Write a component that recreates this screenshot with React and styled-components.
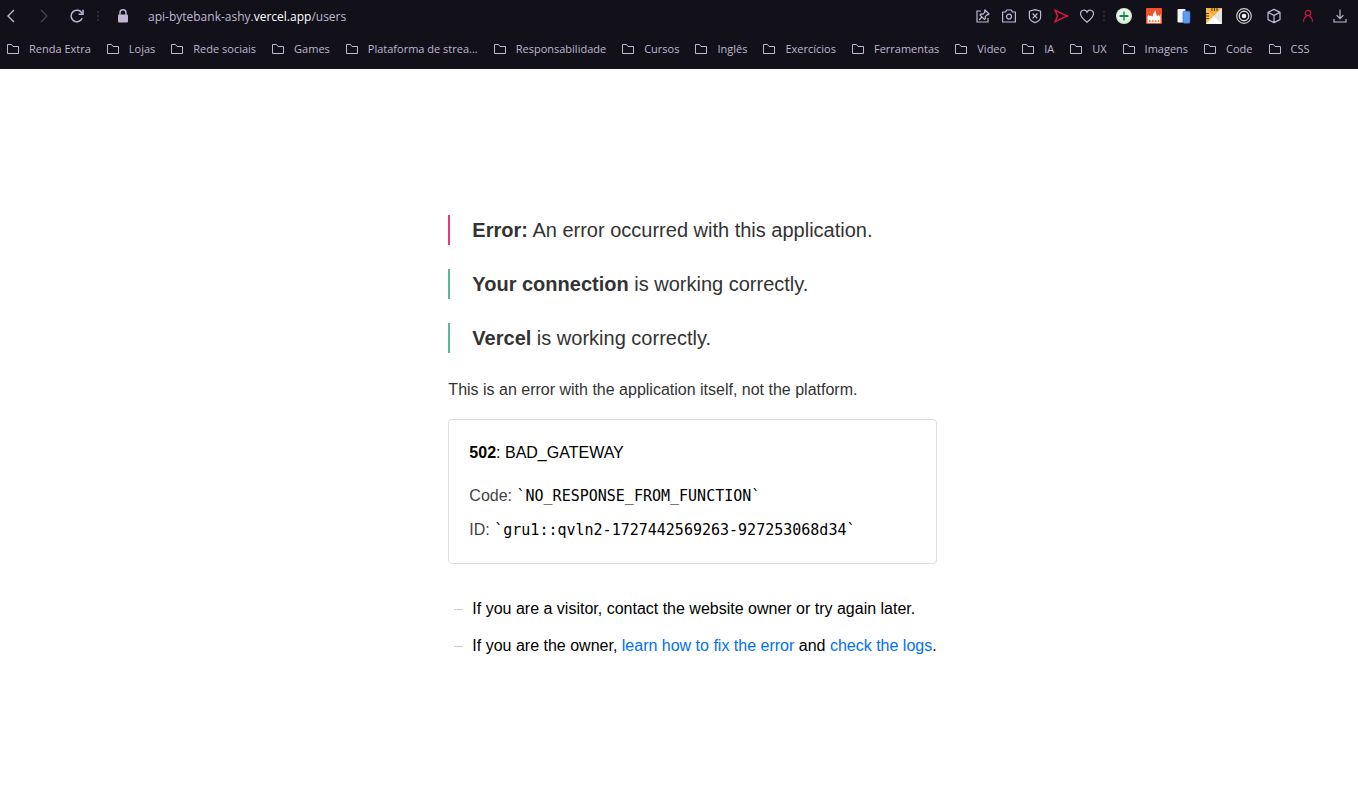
import React from "react";
import styled, { createGlobalStyle } from "styled-components";

const folders = [
    "Renda Extra",
    "Lojas",
    "Rede sociais",
    "Games",
    "Plataforma de strea...",
    "Responsabilidade",
    "Cursos",
    "Inglês",
    "Exercícios",
    "Ferramentas",
    "Video",
    "IA",
    "UX",
    "Imagens",
    "Code",
    "CSS",
];

const Icon = ({ size = 16, children }) => (
    <svg
        width={size}
        height={size}
        viewBox="0 0 16 16"
        fill="none"
        stroke="currentColor"
        strokeWidth="1.2"
        aria-hidden="true"
    >
        {children}
    </svg>
);

const BackIcon = () => (
    <Icon><path d="M11 2L5 8l6 6" strokeWidth="1.4" /></Icon>
);

const ForwardIcon = () => (
    <Icon><path d="M5 2l6 6-6 6" strokeWidth="1.4" /></Icon>
);

const ReloadIcon = () => (
    <Icon>
        <path d="M13.2 10.3A5.8 5.8 0 1 1 13 5.2" strokeWidth="1.5" />
        <path d="M14 1.8v4.4H9.6" strokeWidth="1.5" />
    </Icon>
);

const LockIcon = () => (
    <Icon>
        <path d="M5 7V4.8a3 3 0 0 1 6 0V7" strokeWidth="1.4" />
        <rect x="3" y="6.5" width="10" height="8" rx="1" fill="currentColor" stroke="none" />
    </Icon>
);

const FolderIcon = () => (
    <svg width="12" height="12" viewBox="0 0 12 12" fill="none" stroke="currentColor" aria-hidden="true">
        <path d="M.5 1.5h4l1.5 2h5.5v7H.5z" strokeLinejoin="round" />
    </svg>
);

const PinIcon = () => (
    <Icon>
        <path d="M6 3H2v11h11v-4" />
        <path d="M10 2l4 4-1 .8-.8-.2-2 2 .2 2-1 .9L5 7l1-1 2 .2 2-2L9.5 3zM7 9l-3 3" />
    </Icon>
);

const CameraIcon = () => (
    <Icon>
        <path d="M1.6 4h3l1-2h4.8l1 2h3v10H1.6z" strokeLinejoin="round" />
        <circle cx="8" cy="8.6" r="2.5" />
    </Icon>
);

const ShieldIcon = () => (
    <Icon>
        <path d="M8 1.6l5.6 1.6v6c0 2.5-2.6 4.3-5.6 5.4-3-1.1-5.6-2.9-5.6-5.4v-6z" />
        <path d="M5.6 5.5l4.8 4.8M10.4 5.5l-4.8 4.8" />
    </Icon>
);

const SendIcon = () => (
    <Icon><path d="M2 2.4L14.3 8 2 13.6 4.5 8z" strokeWidth="1.4" /></Icon>
);

const HeartIcon = () => (
    <Icon>
        <path d="M8 14.2C4.5 11.2 1.5 8.9 1.5 5.7A3.4 3.4 0 0 1 8 4.2a3.4 3.4 0 0 1 6.5 1.5C14.5 8.9 11.5 11.2 8 14.2z" />
    </Icon>
);

const PlusIcon = () => (
    <Icon>
        <circle cx="8" cy="8" r="8" fill="#d3ebcd" stroke="none" />
        <circle cx="8" cy="7.4" r="6.6" fill="#ecf7e9" stroke="none" />
        <path d="M8 3.5v9" stroke="#3fb56a" strokeWidth="2" />
        <path d="M3.5 8h9" stroke="#12805c" strokeWidth="2" />
    </Icon>
);

const FlameIcon = () => (
    <Icon>
        <rect width="16" height="16" rx="1" fill="#f1502b" stroke="none" />
        <path d="M1.5 15V8.5l1.2-1.7 1 1.4L5 7.4l1.4 1.4L7.6 5 9.4 2.2 10 5l1 3.4 1.4-1.6.8 1.6L14.5 6v9z" fill="#fff" stroke="none" />
        <path d="M3 13h10.5" stroke="#f1502b" strokeWidth="1.6" strokeDasharray="1.6 1.3" />
    </Icon>
);

const PagesIcon = () => (
    <Icon>
        <rect x="1.5" y="1" width="8" height="13.5" rx="1" fill="#f2f5fa" stroke="none" />
        <rect x="7" y="3.2" width="7" height="12" rx="1.2" fill="#5b9df5" stroke="#3a6fc0" strokeWidth=".6" />
    </Icon>
);

const RulerIcon = () => (
    <Icon>
        <rect width="16" height="16" rx="1" fill="#f2f2f2" stroke="none" />
        <path d="M0 16V1l1-1h15L8 8z" fill="#f7ae3c" stroke="none" />
        <path d="M0 0l8 8-8 8z" fill="#fbbd4a" stroke="none" />
        <path d="M8 8l8 8H0z" fill="#fff" stroke="none" />
        <path d="M16 0v16L8 8z" fill="#e4e4e4" stroke="none" />
        <path d="M6 0v3M8.5 0v3M11 0v3M0 5.5h3M0 8h3M0 10.5h3" stroke="#5d4212" strokeWidth="1.1" />
    </Icon>
);

const TargetIcon = () => (
    <Icon>
        <circle cx="8" cy="8" r="7.3" stroke="#c8c8c8" />
        <circle cx="8" cy="8" r="4.7" stroke="#d8d8d8" strokeWidth="1.4" />
        <circle cx="8" cy="8" r="2.3" fill="#f0f0f0" stroke="none" />
    </Icon>
);

const CubeIcon = () => (
    <Icon>
        <path d="M8 1.4l6 3v7.2l-6 3-6-3V4.4zM2 4.4l6 3 6-3M8 7.4v7.2" strokeLinejoin="round" />
    </Icon>
);

const PersonIcon = () => (
    <Icon>
        <circle cx="8" cy="5" r="2.7" />
        <path d="M3.6 13.8v-1.2c0-2.1 1.4-3.4 3-4.8M12.4 13.8v-1.2c0-2.1-1.4-3.4-3-4.8" />
    </Icon>
);

const DownloadIcon = () => (
    <Icon>
        <path d="M8 1.5v9M4.6 7.2L8 10.6l3.4-3.4M2 11v3h12v-3" />
    </Icon>
);

const Browser = () => {
    return (
        <StyledBrowser>
            <Toolbar>
                <NavButtons>
                    <ToolButton aria-label="Back"><BackIcon /></ToolButton>
                    <ToolButton aria-label="Forward" $color="#454052"><ForwardIcon /></ToolButton>
                    <ToolButton aria-label="Reload"><ReloadIcon /></ToolButton>
                </NavButtons>
                <Dots $before={12} $after={16} />
                <ToolButton aria-label="Site information"><LockIcon /></ToolButton>
                <Address>
                    api-bytebank-ashy.<span>vercel.app</span>/users
                </Address>
                <PageTools>
                    <ToolButton aria-label="Pin"><PinIcon /></ToolButton>
                    <ToolButton aria-label="Snapshot"><CameraIcon /></ToolButton>
                    <ToolButton aria-label="Ad blocker"><ShieldIcon /></ToolButton>
                    <ToolButton aria-label="My Flow" $color="#e0173f"><SendIcon /></ToolButton>
                    <ToolButton aria-label="Add bookmark"><HeartIcon /></ToolButton>
                </PageTools>
                <Dots $before={8} $after={11} />
                <Extensions>
                    <ToolButton aria-label="Add"><PlusIcon /></ToolButton>
                    <ToolButton aria-label="Flame"><FlameIcon /></ToolButton>
                    <ToolButton aria-label="Pages"><PagesIcon /></ToolButton>
                    <ToolButton aria-label="Ruler"><RulerIcon /></ToolButton>
                    <ToolButton aria-label="Target"><TargetIcon /></ToolButton>
                    <ToolButton aria-label="Extensions"><CubeIcon /></ToolButton>
                </Extensions>
                <Profile>
                    <ToolButton aria-label="Profile" $color="#d0173f"><PersonIcon /></ToolButton>
                    <ToolButton aria-label="Downloads"><DownloadIcon /></ToolButton>
                </Profile>
            </Toolbar>
            <Bookmarks>
                {folders.map((name) => (
                    <Bookmark key={name}>
                        <FolderIcon />
                        {name}
                    </Bookmark>
                ))}
            </Bookmarks>
        </StyledBrowser>
    );
};

const App = () => {
    return (
        <>
            <GlobalStyle />
            <Page>
                <Browser />
                <Main>
                    <Content>
                        <Status $color="#eb367f"><strong>Error:</strong> An error occurred with this application.</Status>
                        <Status $color="#59b89c"><strong>Your connection</strong> is working correctly.</Status>
                        <Status $color="#59b89c"><strong>Vercel</strong> is working correctly.</Status>
                        <Note>This is an error with the application itself, not the platform.</Note>
                        <ErrorCard>
                            <h1><strong>502</strong>: BAD_GATEWAY</h1>
                            <p>Code: <code>`NO_RESPONSE_FROM_FUNCTION`</code></p>
                            <p>ID: <code>`gru1::qvln2-1727442569263-927253068d34`</code></p>
                        </ErrorCard>
                        <Steps>
                            <li>If you are a visitor, contact the website owner or try again later.</li>
                            <li>
                                If you are the owner, <a href="#fix">learn how to fix the error</a> and{" "}
                                <a href="#logs">check the logs</a>.
                            </li>
                        </Steps>
                    </Content>
                </Main>
            </Page>
        </>
    );
};

const GlobalStyle = createGlobalStyle`
    *{
        box-sizing: border-box;
        margin: 0;
        padding: 0;
    }
    body{
        background: #fff;
        color: #000;
        font-family: "Liberation Sans", Arial, sans-serif;
        font-size: 16px;
    }
`;

const Page = styled.div`
    display: flex;
    flex-direction: column;
    min-height: 100vh;
`;

const StyledBrowser = styled.header`
    background: #121019;
    color: #bfb7d3;
    font-family: "Open Sans", "Noto Sans", sans-serif;
    padding-bottom: 4px;
`;

const Toolbar = styled.div`
    display: flex;
    align-items: center;
    height: 32px;
    padding: 0 10px 0 3px;
`;

const ToolButton = styled.button`
    display: flex;
    background: none;
    border: none;
    color: ${(props) => props.$color || "inherit"};
    cursor: pointer;
`;

const NavButtons = styled.nav`
    display: flex;
    gap: 17px;
`;

const Dots = styled.span`
    width: 2px;
    height: 10px;
    margin-left: ${(props) => props.$before}px;
    margin-right: ${(props) => props.$after}px;
    background: repeating-linear-gradient(#2b2835 0 2px, transparent 2px 4px);
`;

const Address = styled.div`
    flex: 1;
    padding-left: 17px;
    font-size: 12px;
    white-space: nowrap;
    span{
        color: #fff;
    }
`;

const PageTools = styled.div`
    display: flex;
    gap: 10px;
`;

const Extensions = styled.div`
    display: flex;
    gap: 14px;
`;

const Profile = styled.div`
    display: flex;
    gap: 16px;
    padding-left: 18px;
`;

const Bookmarks = styled.nav`
    display: flex;
    align-items: center;
    gap: 16px;
    height: 33px;
    padding: 0 7px;
    overflow: hidden;
`;

const Bookmark = styled.button`
    display: flex;
    align-items: center;
    gap: 10px;
    background: none;
    border: none;
    color: inherit;
    cursor: pointer;
    font-family: inherit;
    font-size: 11px;
    white-space: nowrap;
    svg{
        flex: none;
    }
`;

const Main = styled.main`
    display: flex;
    flex: 1;
    align-items: center;
    justify-content: center;
    padding: 7px 0 0 27px;
`;

const Content = styled.div`
    line-height: 20px;
`;

const Status = styled.p`
    border-left: 2px solid ${(props) => props.$color};
    color: #333;
    font-size: 20px;
    line-height: 30px;
    margin-bottom: 24px;
    padding-left: 22px;
`;

const Note = styled.p`
    color: #333;
    line-height: 26px;
    margin-bottom: 16px;
`;

const ErrorCard = styled.section`
    border: 1px solid #ddd;
    border-radius: 4px;
    padding: 23px 20px;
    h1{
        font-size: 16px;
        font-weight: 400;
        margin-bottom: 23px;
    }
    p{
        color: #444;
    }
    p + p{
        margin-top: 14px;
    }
    code{
        color: #000;
        font-family: "DejaVu Sans Mono", monospace;
        font-size: 15px;
    }
`;

const Steps = styled.ul`
    list-style: none;
    margin-top: 32px;
    li{
        line-height: 26px;
        padding-left: 6px;
    }
    li + li{
        margin-top: 11px;
    }
    li::before{
        content: "";
        display: inline-block;
        width: 9px;
        height: 1px;
        margin-right: 9px;
        background: #ccc;
        vertical-align: 4px;
    }
    a{
        color: #0070f3;
        text-decoration: none;
    }
`;

export default App;
